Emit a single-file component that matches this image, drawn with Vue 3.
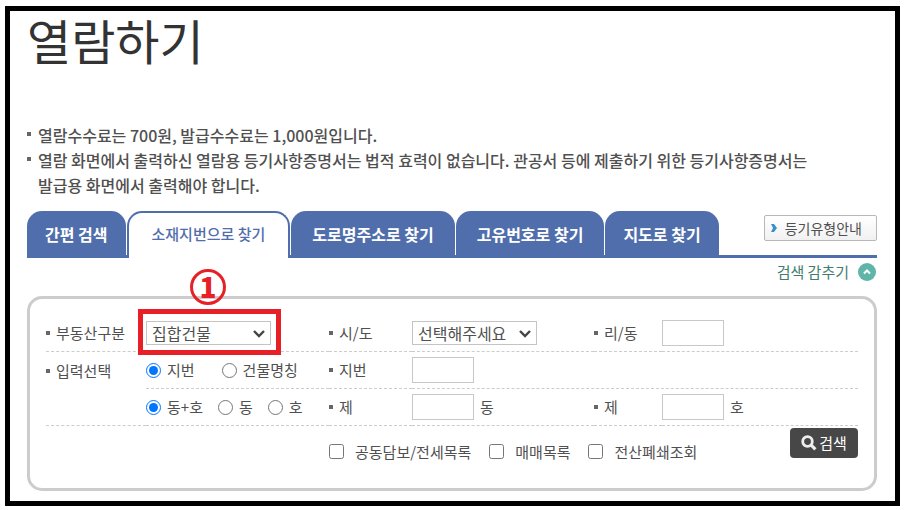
<script setup>
import { ref } from 'vue'

const tabs = [
  { label: '간편 검색' },
  { label: '소재지번으로 찾기', active: true },
  { label: '도로명주소로 찾기', wide: true },
  { label: '고유번호로 찾기', wide: true },
  { label: '지도로 찾기' },
]
const kind = ref('집합건물')
const city = ref('선택해주세요')
const mode = ref('지번')
const unit = ref('동+호')
const options = ['공동담보/전세목록', '매매목록', '전산폐쇄조회']
</script>

<template>
  <main class="page">
    <div class="frame">
      <h1>열람하기</h1>
      <ul class="notes">
        <li>열람수수료는 700원, 발급수수료는 1,000원입니다.</li>
        <li>
          열람 화면에서 출력하신 열람용 등기사항증명서는 법적 효력이 없습니다. 관공서 등에 제출하기 위한 등기사항증명서는<br />
          발급용 화면에서 출력해야 합니다.
        </li>
      </ul>

      <div class="tabbar">
        <nav class="tabs">
          <a v-for="t in tabs" :key="t.label" href="#" class="tab" :class="{ active: t.active, wide: t.wide }">{{ t.label }}</a>
        </nav>
        <button type="button" class="guide">
          <svg width="6" height="8" viewBox="0 0 6 8"><path d="M0 0H3L6 4L3 8H0L2 4Z" fill="#3a8fc8" /></svg>
          등기유형안내
        </button>
      </div>

      <div class="toggle-row">
        <button type="button" class="toggle">
          검색 감추기
          <svg width="18" height="18" viewBox="0 0 18 18">
            <circle cx="9" cy="9" r="9" fill="#5fb5a8" />
            <path d="M6 10.5L9 7.5L12 10.5" fill="none" stroke="#fff" stroke-width="2" />
          </svg>
        </button>
      </div>

      <form class="panel" @submit.prevent>
        <div class="grid">
          <label class="name" for="kind">부동산구분</label>
          <div class="cell">
            <div class="select">
              <select id="kind" v-model="kind"><option>집합건물</option></select>
              <svg width="14" height="9" viewBox="0 0 14 9"><path d="M2 2L7 7L12 2" fill="none" stroke="#444" stroke-width="2.4" /></svg>
              <span class="highlight"></span>
              <span class="step">1</span>
            </div>
          </div>
          <label class="name" for="city">시/도</label>
          <div class="cell">
            <div class="select">
              <select id="city" v-model="city"><option>선택해주세요</option></select>
              <svg width="14" height="9" viewBox="0 0 14 9"><path d="M2 2L7 7L12 2" fill="none" stroke="#444" stroke-width="2.4" /></svg>
            </div>
          </div>
          <label class="name" for="village">리/동</label>
          <div class="cell"><input id="village" class="text" type="text" /></div>

          <span class="name open">입력선택</span>
          <div class="cell far">
            <label class="choice"><input v-model="mode" type="radio" name="mode" value="지번" />지번</label>
            <label class="choice"><input v-model="mode" type="radio" name="mode" value="건물명칭" />건물명칭</label>
          </div>
          <label class="name" for="lot">지번</label>
          <div class="cell rest"><input id="lot" class="text" type="text" /></div>

          <span class="cell"></span>
          <div class="cell near">
            <label class="choice"><input v-model="unit" type="radio" name="unit" value="동+호" />동+호</label>
            <label class="choice"><input v-model="unit" type="radio" name="unit" value="동" />동</label>
            <label class="choice"><input v-model="unit" type="radio" name="unit" value="호" />호</label>
          </div>
          <label class="name" for="building">제</label>
          <div class="cell unit"><input id="building" class="text" type="text" /><span>동</span></div>
          <label class="name" for="room">제</label>
          <div class="cell unit"><input id="room" class="text" type="text" /><span>호</span></div>

          <div class="options">
            <label v-for="o in options" :key="o" class="check"><input type="checkbox" />{{ o }}</label>
          </div>
          <button type="submit" class="search">
            <svg width="16" height="16" viewBox="0 0 16 16">
              <circle cx="6.5" cy="6.5" r="4.8" fill="none" stroke="#eee" stroke-width="2.8" />
              <path d="M10.2 10.2L14.4 14.4" stroke="#eee" stroke-width="3.2" />
            </svg>
            검색
          </button>
        </div>
      </form>
    </div>
  </main>
</template>

<style>
body {
  background: #fff;
}
</style>

<style scoped>
* {
  box-sizing: border-box;
}
.page {
  padding: 6px 4px 4px 5px;
  font-family: "Noto Sans CJK KR", sans-serif;
  font-size: 15px;
  line-height: 24px;
  color: #505050;
}
.frame {
  border: 5px solid #000;
  padding: 0 18px 10px 17px;
}
button,
input,
select {
  font: inherit;
  color: inherit;
  margin: 0;
}
h1 {
  margin: 0 0 56px;
  font-size: 48px;
  line-height: 56px;
  font-weight: 400;
  color: #333;
}
.notes {
  list-style: none;
  margin: 0 0 13px;
  padding: 0;
  font-size: 16px;
  line-height: 25px;
  font-weight: 500;
  white-space: nowrap;
}
.notes li {
  position: relative;
  padding-left: 11px;
}
.notes li::before {
  content: "";
  position: absolute;
  left: 0;
  top: 9px;
  width: 4px;
  height: 4px;
  background: #666;
}
.tabbar {
  display: flex;
  justify-content: space-between;
  align-items: flex-start;
  height: 47px;
  border-bottom: 3px solid #506eac;
}
.tabs {
  display: flex;
  gap: 1px;
  white-space: nowrap;
}
.tab {
  height: 44px;
  padding: 0 18px;
  border-radius: 15px 15px 0 0;
  background: #506eac;
  color: #fff;
  font-size: 16px;
  font-weight: 700;
  line-height: 46px;
  text-decoration: none;
}
.tab.wide {
  padding: 0 21px;
}
.tab.active {
  height: 47px;
  padding: 0 23px;
  border: 2px solid #506eac;
  border-bottom: 0;
  background: #fff;
  color: #506eac;
  font-size: 15px;
  font-weight: 500;
  line-height: 42px;
}
.guide {
  display: flex;
  align-items: center;
  gap: 8px;
  height: 26px;
  margin-top: 4px;
  padding: 0 14px 0 6px;
  border: 1px solid #b8b8b8;
  border-radius: 2px;
  background: linear-gradient(#fff, #f1f1f1);
  font-size: 14px;
  white-space: nowrap;
}
.toggle-row {
  display: flex;
  justify-content: flex-end;
  padding: 2px 1px 12px;
}
.toggle {
  display: flex;
  align-items: center;
  gap: 9px;
  padding: 0;
  border: 0;
  background: none;
  color: #3f7d70;
}
.panel {
  border: 3px solid #ccc;
  border-radius: 15px;
  padding: 16px 16px 25px;
}
.grid {
  display: grid;
  grid-template-columns: 100fr 183fr 83fr 182fr 68fr 196fr;
  grid-auto-rows: 37px;
  white-space: nowrap;
}
.name,
.cell {
  display: flex;
  align-items: center;
  border-bottom: 1px dashed #ccc;
}
.name {
  gap: 6px;
}
.name::before {
  content: "";
  width: 4px;
  height: 4px;
  background: #666;
}
.name.open {
  border-bottom: 0;
}
.rest {
  grid-column: span 3;
}
.far {
  gap: 27px;
}
.near {
  gap: 15px;
}
.unit {
  gap: 6px;
}
.select {
  position: relative;
  display: flex;
}
.select select {
  appearance: none;
  width: 125px;
  height: 24px;
  padding: 0 5px;
  border: 1px solid #c4c4c4;
  border-radius: 0;
  background: #fff;
  font-size: 16px;
  line-height: 22px;
}
.select svg {
  position: absolute;
  right: 5px;
  top: 8px;
  pointer-events: none;
}
.highlight {
  position: absolute;
  inset: -12px -10px -10px -8px;
  border: 5px solid #e71f26;
  pointer-events: none;
}
.step {
  position: absolute;
  left: 44px;
  top: -52px;
  width: 36px;
  height: 36px;
  border: 3px solid #e71f26;
  border-radius: 50%;
  color: #e71f26;
  font-size: 28px;
  line-height: 28px;
  font-weight: 900;
  text-align: center;
}
.text {
  width: 62px;
  height: 26px;
  padding: 0 4px;
  border: 1px solid #c8c8c8;
  background: #fff;
}
.choice,
.check {
  display: flex;
  align-items: center;
  gap: 6px;
}
.choice input,
.check input {
  width: 15px;
  height: 15px;
}
.options {
  grid-column: 3 / 6;
  display: flex;
  align-items: center;
  gap: 18px;
  padding-top: 14px;
}
.check {
  gap: 11px;
}
.search {
  display: flex;
  align-items: center;
  justify-content: center;
  justify-self: end;
  gap: 2px;
  width: 68px;
  height: 30px;
  margin-top: 2px;
  padding: 0;
  border: 0;
  border-radius: 4px;
  background: #474747;
  color: #fff;
}
</style>
